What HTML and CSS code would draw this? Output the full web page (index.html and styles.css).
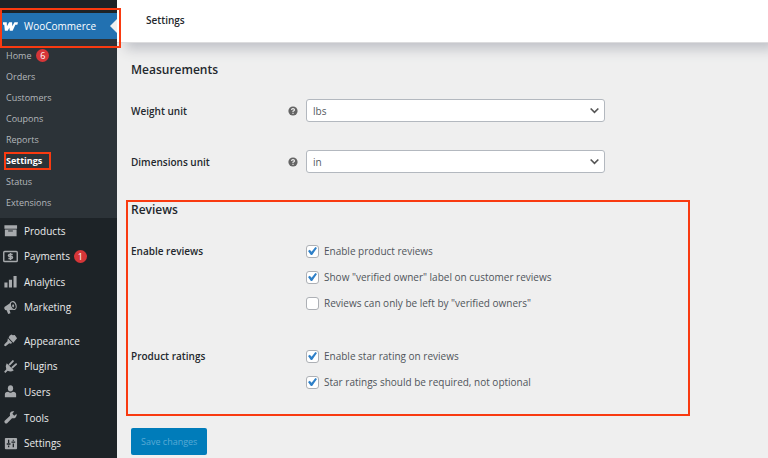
FILE: index.html
```html
<!DOCTYPE html>
<html lang="en">
<head>
<meta charset="utf-8">
<title>Settings</title>
<link rel="stylesheet" href="styles.css">
</head>
<body>
<div class="app">
  <nav class="sidebar" aria-label="Admin menu">
    <div class="current callout callout-menu">
      <a class="item item-current" href="#">
        <svg class="icon" viewBox="0 0 16 16"><path d="M0 3.500h4l.2 4.300L6.500 3.500h3.200l.2 4.300 2.300-4.300H16l-.7 2.500h-2.100L10.300 12.500H7.200L6.800 9.300 5 12.500H2L1.300 6H-.2z" fill="#fff"/></svg>
        WooCommerce
      </a>
    </div>
    <ul class="submenu">
      <li><a href="#">Home <span class="badge">6</span></a></li>
      <li><a href="#">Orders</a></li>
      <li><a href="#">Customers</a></li>
      <li><a href="#">Coupons</a></li>
      <li><a href="#">Reports</a></li>
      <li class="callout callout-settings"><a class="active" href="#">Settings</a></li>
      <li><a href="#">Status</a></li>
      <li><a href="#">Extensions</a></li>
    </ul>
    <ul class="menu">
      <li><a class="item" href="#"><svg class="icon" viewBox="0 0 16 16"><path d="M1.500 2.500h13.500v3.500h-13.500zM2 7h12.500v7H2z" fill="currentColor"/><path d="M5.500 8.500h5" stroke="#1d2327"/></svg>Products</a></li>
      <li><a class="item" href="#"><svg class="icon" viewBox="0 0 16 16"><rect x=".8" y="2.600" width="14.400" height="10.800" rx="1" fill="none" stroke="currentColor" stroke-width="1.500"/><path d="M10.300 5.800H7.200q-1.400 0-1.400 1.100T7.200 8h1.600q1.400 0 1.400 1.100t-1.400 1.100H5.700M8 4.300v7.400" fill="none" stroke="currentColor" stroke-width="1.500"/></svg>Payments <span class="badge badge-small">1</span></a></li>
      <li><a class="item" href="#"><svg class="icon" viewBox="0 0 16 16"><path d="M1.500 9h3.300v5.500H1.500zM6.300 6h3.300v8.500H6.300zM11.200 2h3.300v12.500h-3.300z" fill="currentColor"/></svg>Analytics</a></li>
      <li><a class="item" href="#"><svg class="icon" viewBox="0 0 16 16"><path d="M1.500 7.500 9 2.500l3 8-5 .2 1 3.300-2.500 1-1.600-4-1.600-.3Q.8 9 1.500 7.500z" fill="currentColor"/><ellipse cx="11" cy="6" rx="2.900" ry="4.300" transform="rotate(-18 11 6)" fill="#1d2327" stroke="currentColor" stroke-width="1.200"/><ellipse cx="10.800" cy="6.200" rx="1" ry="1.800" fill="currentColor"/></svg>Marketing</a></li>
    </ul>
    <ul class="menu menu-system">
      <li><a class="item" href="#"><svg class="icon" viewBox="0 0 16 16"><path d="m7 3 2-1.500 1.500 1L12.500 2l2.500 3.500-4 4.800L6 5zM5.200 5.600l4.700 5-2 .9-1.200-.6-3.900 3.200-1.500-.6.200-1.500 3.200-3.300z" fill="currentColor"/></svg>Appearance</a></li>
      <li><a class="item" href="#"><svg class="icon" viewBox="0 0 16 16"><path d="m4 4.500 7.500 7.400Q8.500 14.500 5 12.600L2.500 15 1.200 13.600 3.500 11Q2 7.500 4 4.500z" fill="currentColor"/><path d="m7 6 3.600-3.800M10 9.100l4-3.600" stroke="currentColor" stroke-width="2" stroke-linecap="round"/></svg>Plugins</a></li>
      <li><a class="item" href="#"><svg class="icon" viewBox="0 0 16 16"><ellipse cx="8" cy="4.600" rx="2.800" ry="3.400" fill="currentColor"/><path d="M2 14v-3q0-2.500 3.500-2.700Q8 10.500 10.500 8.300 14 8.500 14 11v3z" fill="currentColor"/></svg>Users</a></li>
      <li><a class="item" href="#"><svg class="icon" viewBox="0 0 16 16"><path d="M14.500 4 12 6 10 4l2-2.600Q9.500.7 8 2.500 6.800 4 7.500 6.200L1.800 11.500Q.9 12.600 2 13.800t2.400.4L9.600 8.700q2.300.6 3.900-.8Q15 6.300 14.500 4z" fill="currentColor"/></svg>Tools</a></li>
      <li><a class="item" href="#"><svg class="icon" viewBox="0 0 16 16"><rect x="2" y="2" width="13" height="12" rx="1" fill="currentColor"/><path d="M6 4v3.500M6 10v2M4 8.500h4M11 8v4M11 4v1M9 6.500h4" stroke="#1d2327" stroke-width="1.400"/></svg>Settings</a></li>
    </ul>
  </nav>

  <main class="main">
    <header class="topbar"><h1>Settings</h1></header>
    <form class="form">
      <h2>Measurements</h2>
      <div class="row">
        <label for="weight">Weight unit</label>
        <svg class="tip" viewBox="0 0 10 10"><circle cx="5" cy="5" r="4.600" fill="#646464"/><path d="M3.500 4Q3.600 2.600 5 2.600T6.500 3.900Q6.500 4.600 5 5.200V6M5 6.800V8" fill="none" stroke="#efefef" stroke-width="1.100"/></svg>
        <span class="select">
          <select id="weight"><option>lbs</option><option>kg</option></select>
          <svg class="chevron" viewBox="0 0 10 10"><path d="m1.500 3.200 3.500 3.500 3.500-3.500" fill="none" stroke="#555" stroke-width="1.500"/></svg>
        </span>
      </div>
      <div class="row">
        <label for="dimensions">Dimensions unit</label>
        <svg class="tip" viewBox="0 0 10 10"><circle cx="5" cy="5" r="4.600" fill="#646464"/><path d="M3.500 4Q3.600 2.600 5 2.600T6.500 3.900Q6.500 4.600 5 5.200V6M5 6.800V8" fill="none" stroke="#efefef" stroke-width="1.100"/></svg>
        <span class="select">
          <select id="dimensions"><option>in</option><option>cm</option></select>
          <svg class="chevron" viewBox="0 0 10 10"><path d="m1.500 3.200 3.500 3.500 3.500-3.500" fill="none" stroke="#555" stroke-width="1.500"/></svg>
        </span>
      </div>

      <section class="reviews callout callout-reviews">
        <h2>Reviews</h2>
        <fieldset class="group">
          <legend>Enable reviews</legend>
          <div class="checks">
            <label><input type="checkbox" checked>Enable product reviews</label>
            <label><input type="checkbox" checked>Show "verified owner" label on customer reviews</label>
            <label><input type="checkbox">Reviews can only be left by "verified owners"</label>
          </div>
        </fieldset>
        <fieldset class="group">
          <legend>Product ratings</legend>
          <div class="checks">
            <label><input type="checkbox" checked>Enable star rating on reviews</label>
            <label><input type="checkbox" checked>Star ratings should be required, not optional</label>
          </div>
        </fieldset>
      </section>
      <button class="save" type="button">Save changes</button>
    </form>
  </main>
</div>
</body>
</html>
```
FILE: styles.css
```css
*, *::before, *::after { box-sizing: border-box; }

body {
  margin: 0;
  background: #efefef;
  color: #2c3338;
  font-family: "Open Sans", "Noto Sans", sans-serif;
  font-size: 10px;
  line-height: 16px;
}

ul { list-style: none; margin: 0; padding: 0; }
a { color: inherit; text-decoration: none; }
h1, h2 { margin: 0; font-weight: 600; color: #23282d; }

.app { display: flex; min-height: 100vh; }

/* Outlines that highlight parts of the page */
.callout { position: relative; }
.callout::after {
  content: "";
  position: absolute;
  z-index: 3;
  border: 2px solid #f93a10;
  pointer-events: none;
}
.callout-menu::after { inset: -5px -4px -9px 0; }
.callout-settings::after { inset: 2px auto 1px 4px; width: 47px; }
.callout-reviews::after { inset: 0; }

/* Sidebar */
.sidebar {
  flex: 0 0 117px;
  padding-top: 13px;
  background: #1d2327;
  color: #eaebec;
  font-size: 10px;
}
.item { display: flex; align-items: center; gap: 6px; height: 100%; padding-left: 3px; }
.icon { flex: none; width: 15px; height: 15px; color: #a7aaad; }
.item-current { height: 26px; background: #2271b1; color: #fff; }
.current::before {
  content: "";
  position: absolute;
  top: 6px;
  right: 0;
  border: 7px solid transparent;
  border-left: 0;
  border-right-color: #efefef;
}
.submenu { padding: 6px 0 5px; background: #2c3338; color: #b4b8bc; font-size: 9px; }
.submenu a { display: flex; align-items: center; gap: 5px; height: 21px; padding-left: 6px; }
.submenu .active { color: #fff; font-weight: 700; }
.badge {
  width: 13px;
  height: 13px;
  border-radius: 50%;
  background: #d63638;
  color: #fff;
  font-size: 9px;
  line-height: 13px;
  text-align: center;
}
.badge-small { margin-left: -2px; }
.menu { display: grid; grid-auto-rows: 1fr; height: 102px; }
.menu-system { height: 128px; margin-top: 8px; }

/* Content */
.main { flex: 1; min-width: 0; }
.topbar {
  padding: 12px 29px 14px;
  border-bottom: 1px solid #dcdcde;
  background: #fff;
  box-shadow: 8px 6px 12px #bfc1c7;
  clip-path: inset(0 0 -24px 0);
}
h1 { font-size: 10px; line-height: 16px; }
h2 { font-size: 12px; line-height: 18px; }
.form { padding: 18px 14px 4px; }
.row {
  display: grid;
  grid-template-columns: 149px 10px minmax(0, 299px);
  column-gap: 8px;
  align-items: center;
  margin-top: 20px;
}
.row + .row { margin-top: 28px; }
.row label, legend { font-weight: 600; color: #23282d; }
.tip { width: 10px; height: 10px; }
.select { position: relative; display: block; }
.select select {
  display: block;
  width: 100%;
  height: 23px;
  padding: 0 24px 0 6px;
  border: 1px solid #b3b8bf;
  border-radius: 3px;
  appearance: none;
  background: #fff;
  color: #555a60;
  font: inherit;
}
.chevron { position: absolute; top: 6px; right: 5px; width: 11px; height: 11px; pointer-events: none; }

.reviews { max-width: 564px; height: 216px; margin: 27px 0 0 -5px; padding: 1px 5px; }
.group {
  display: flex;
  margin: 24px 0 0;
  padding: 0;
  border: 0;
}
.group + .group { margin-top: 37px; }
legend { float: left; width: 175px; padding: 0; }
.checks { display: grid; gap: 10px; color: #50555b; }
.checks label { display: flex; align-items: center; gap: 5px; }
.checks input {
  display: grid;
  place-items: center;
  width: 13px;
  height: 13px;
  margin: 0;
  border: 1px solid #adb0b5;
  border-radius: 3px;
  appearance: none;
  background: #fff;
}
.checks input:checked::before {
  content: "";
  width: 9px;
  height: 8px;
  background: #2f80c8;
  clip-path: polygon(0 50%, 20% 34%, 40% 60%, 82% 0, 100% 12%, 46% 100%, 32% 100%);
}
.save {
  height: 27px;
  margin-top: 12px;
  padding: 0 10px;
  border: 0;
  border-radius: 2px;
  background: #007cba;
  color: #58aad5;
  font: inherit;
  font-size: 9px;
}
```
